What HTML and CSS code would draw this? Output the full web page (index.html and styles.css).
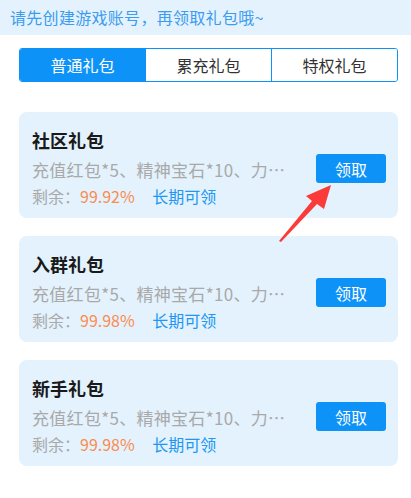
FILE: index.html
```html
<!DOCTYPE html>
<html lang="zh-CN">
<head>
    <meta charset="UTF-8">
    <meta name="viewport" content="width=device-width, initial-scale=1.0">
    <title>礼包中心</title>
    <link rel="stylesheet" href="styles.css">
</head>
<body>
    <div class="notice">请先创建游戏账号，再领取礼包哦~</div>

    <div class="container">
        <!-- Abas -->
        <div class="tabs">
            <div class="tab active">普通礼包</div>
            <div class="tab">累充礼包</div>
            <div class="tab">特权礼包</div>
        </div>

        <!-- Lista de pacotes -->
        <div class="gift-list">
            <div class="gift-card">
                <div class="gift-info">
                    <div class="gift-title">社区礼包</div>
                    <div class="gift-desc">充值红包*5、精神宝石*10、力…</div>
                    <div class="gift-meta">
                        <span class="meta-label">剩余：</span><span class="meta-rate">99.92%</span>
                        <span class="meta-time">长期可领</span>
                    </div>
                </div>
                <button class="btn-get">领取</button>
            </div>

            <div class="gift-card">
                <div class="gift-info">
                    <div class="gift-title">入群礼包</div>
                    <div class="gift-desc">充值红包*5、精神宝石*10、力…</div>
                    <div class="gift-meta">
                        <span class="meta-label">剩余：</span><span class="meta-rate">99.98%</span>
                        <span class="meta-time">长期可领</span>
                    </div>
                </div>
                <button class="btn-get">领取</button>
            </div>

            <div class="gift-card">
                <div class="gift-info">
                    <div class="gift-title">新手礼包</div>
                    <div class="gift-desc">充值红包*5、精神宝石*10、力…</div>
                    <div class="gift-meta">
                        <span class="meta-label">剩余：</span><span class="meta-rate">99.98%</span>
                        <span class="meta-time">长期可领</span>
                    </div>
                </div>
                <button class="btn-get">领取</button>
            </div>
        </div>
    </div>

    <!-- Seta de destaque -->
    <svg class="arrow" width="411" height="498" viewBox="0 0 411 498">
        <polygon points="279,241 312,201 306,196 331,185 324,209 317,204 281,242" fill="#fb3a3a"/>
    </svg>
</body>
</html>
```

FILE: styles.css
```css
:root {
    --primary: #0d93f8;
    --notice-bg: #e4f2fd;
    --notice-text: #3c9cf0;
    --card-bg: #e3f2fd;
    --gray: #a9a9a9;
    --orange: #fb8c4f;
    --link: #2196f3;
    --dark: #1a1a1a;
}

* {
    box-sizing: border-box;
    margin: 0;
    padding: 0;
    font-family: 'Noto Sans CJK SC', 'Noto Sans', sans-serif;
}

body {
    background-color: #fff;
    color: var(--dark);
    width: 411px;
    height: 498px;
    overflow: hidden;
    position: relative;
}

/* Aviso no topo */
.notice {
    background-color: var(--notice-bg);
    color: var(--notice-text);
    height: 35px;
    line-height: 35px;
    font-size: 16px;
    letter-spacing: 0.3px;
    padding-left: 10px;
}

.container {
    padding: 13px 13px 0 19px;
}

/* Abas */
.tabs {
    display: flex;
    width: 379px;
    height: 34px;
    border: 1px solid var(--primary);
    border-radius: 3px;
    overflow: hidden;
}

.tab {
    flex: 1;
    text-align: center;
    line-height: 32px;
    font-size: 16px;
    color: #333;
    background: #fff;
    border-left: 1px solid var(--primary);
}

.tab:first-child {
    border-left: none;
}

.tab.active {
    background-color: var(--primary);
    color: #fff;
}

/* Cartões */
.gift-list {
    display: flex;
    flex-direction: column;
    gap: 18px;
    margin-top: 30px;
    width: 379px;
}

.gift-card {
    background-color: var(--card-bg);
    border-radius: 8px;
    height: 106px;
    padding: 16px 12px 9px 13px;
    display: flex;
    align-items: center;
}

.gift-info {
    flex: 1;
    min-width: 0;
    margin-right: 12px;
    align-self: flex-start;
}

.gift-title {
    font-size: 18px;
    font-weight: bold;
    line-height: 24px;
}

.gift-desc {
    margin-top: 5px;
    font-size: 17px;
    letter-spacing: 0.3px;
    line-height: 26px;
    color: var(--gray);
    white-space: nowrap;
}

.gift-meta {
    font-size: 16px;
    line-height: 26px;
    color: var(--gray);
}

.meta-rate {
    color: var(--orange);
}

.meta-time {
    color: var(--link);
    margin-left: 14px;
}

.btn-get {
    width: 70px;
    height: 29px;
    border: none;
    border-radius: 3px;
    background-color: var(--primary);
    color: #fff;
    font-size: 16px;
    flex-shrink: 0;
}

/* Seta vermelha */
.arrow {
    position: absolute;
    top: 0;
    left: 0;
    pointer-events: none;
}
```
